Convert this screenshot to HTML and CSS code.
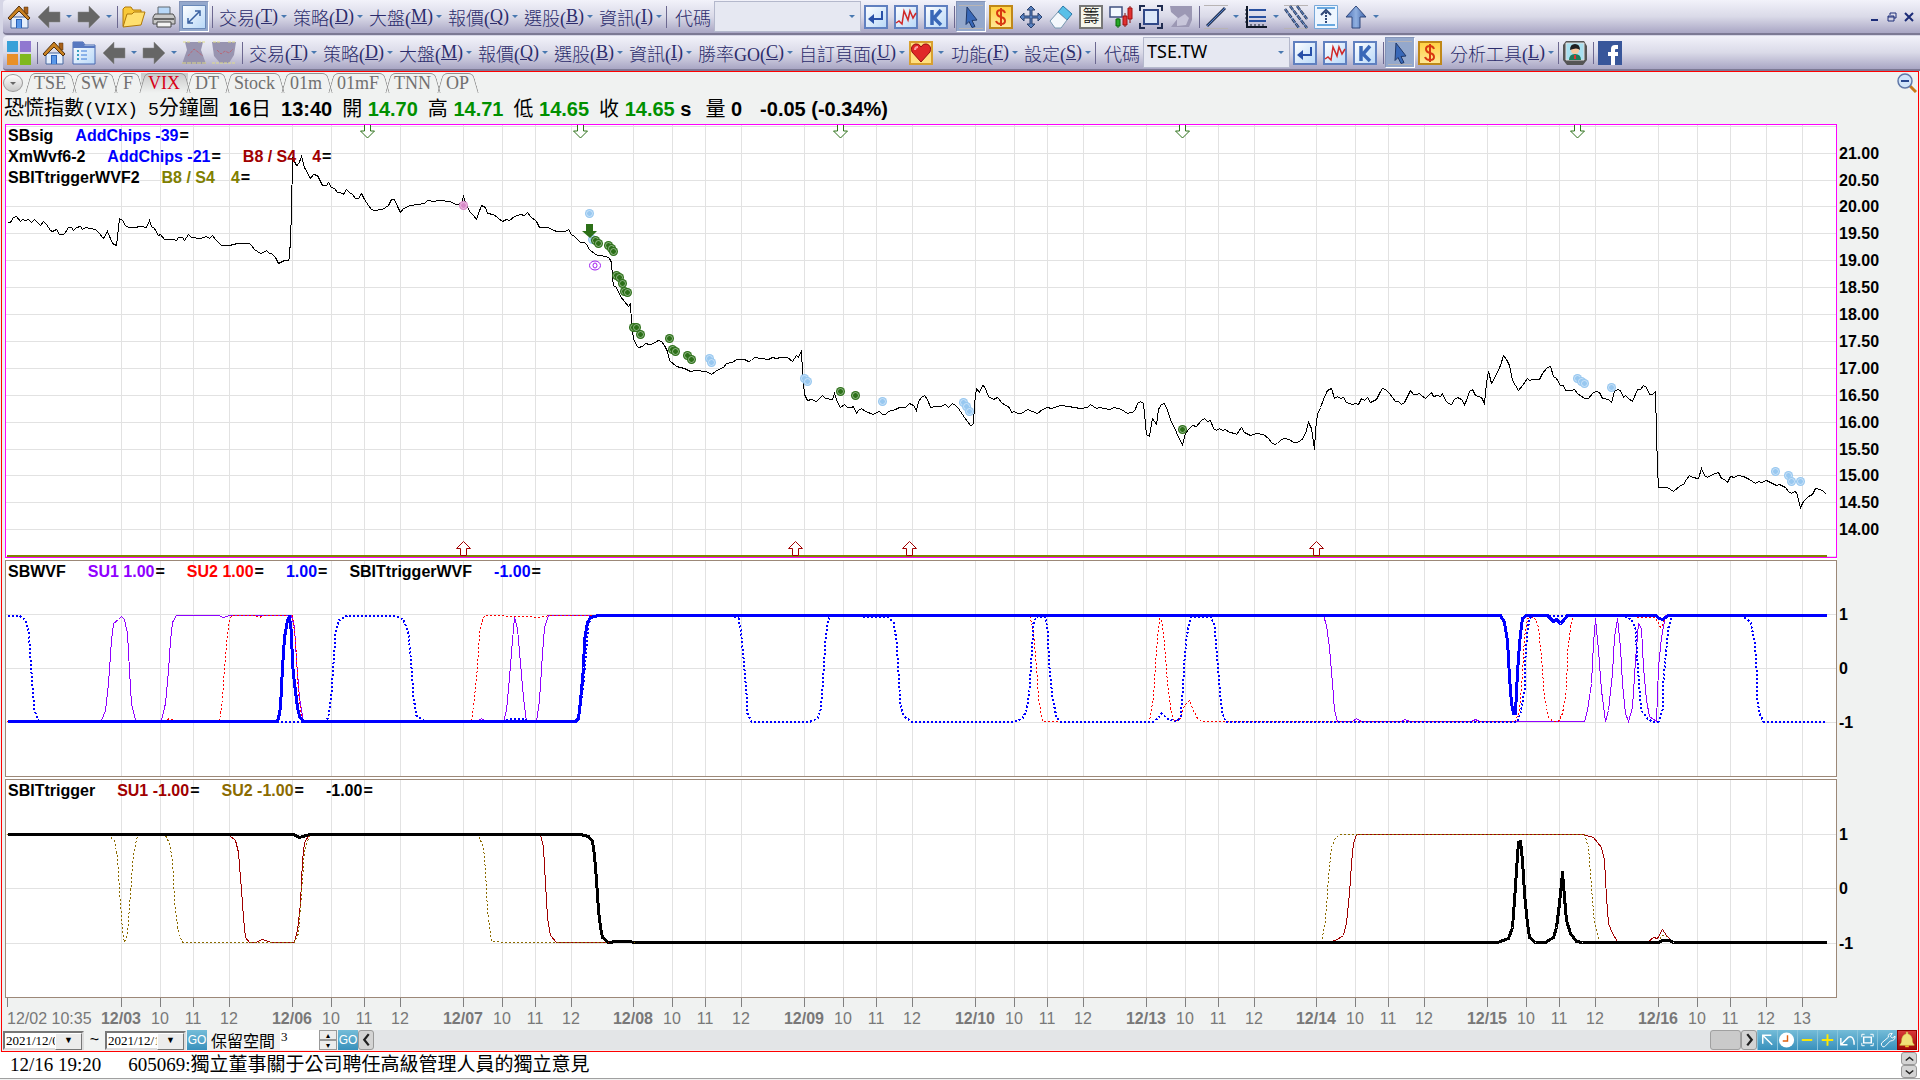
FILE: index.html
```html
<!DOCTYPE html>
<html lang="zh-Hant">
<head>
  <meta charset="UTF-8">
  <meta name="viewport" content="width=device-width, initial-scale=1.0">
  <title>恐慌指數(VIX)</title>
  <link rel="stylesheet" href="styles.css">
</head>
<body>
  <!-- icon set, 24x24 -->
  <svg class="icons" width="0" height="0">
    <defs>
      <linearGradient id="gBox" x1="0" y1="0" x2="1" y2="1"><stop offset="0" stop-color="#fff"/><stop offset="1" stop-color="#b8d8f8"/></linearGradient>
      <linearGradient id="gGold" x1="0" y1="0" x2="0" y2="1"><stop offset="0" stop-color="#ffd040"/><stop offset="1" stop-color="#ffe898"/></linearGradient>
      <linearGradient id="gArrow" x1="0" y1="0" x2="1" y2="0"><stop offset="0" stop-color="#4a70b8"/><stop offset=".5" stop-color="#90b0e0"/><stop offset="1" stop-color="#3a60a8"/></linearGradient>
      <symbol id="home" viewBox="0 0 24 24">
        <path d="M4 12h17v11H4z" fill="#e4eefc" stroke="#4868a0"/>
        <path d="M9 14h6v9H9z" fill="#2860b8"/><path d="M10 15h4v8h-4z" fill="#5a98e8"/>
        <path d="M17 2h4v7h-4z" fill="#a86018" stroke="#503010" stroke-width=".5"/>
        <path d="M1 13L12 1l11 12-2 2-9-9-9 9z" fill="#c88020" stroke="#503010"/>
      </symbol>
      <symbol id="back" viewBox="0 0 24 24"><path d="M1 12L12 1v6h11v10H12v6z" fill="#666" stroke="#888" stroke-width=".5"/></symbol>
      <symbol id="next" viewBox="0 0 24 24"><path d="M23 12L12 1v6H1v10h11v6z" fill="#666" stroke="#888" stroke-width=".5"/></symbol>
      <symbol id="folder" viewBox="0 0 24 24"><path d="M1 21V4l2-2h6l2 3h8v5" fill="#f8c838" stroke="#b07808"/><path d="M1 22L5 9h5l2-2h11l-4 13z" fill="#ffe070" stroke="#b07808"/></symbol>
      <symbol id="printer" viewBox="0 0 24 24"><path d="M6 2h12v9H6z" fill="#b8d8f8" stroke="#606870"/><path d="M3 9h18l2 3v7H1v-7z" fill="#c8c8c8" stroke="#505050"/><path d="M2 13h20v2H2z" fill="#666"/><path d="M5 17h14v5H5z" fill="#f4f4f4" stroke="#444"/></symbol>
      <symbol id="expand" viewBox="0 0 24 24"><path d="M.5.5h23v23H.5z" fill="url(#gBox)" stroke="#6888b8"/><path d="M7 17L17 7M13 6h5v5M6 13v5h5" fill="none" stroke="#3860a0" stroke-width="1.5"/></symbol>
      <symbol id="enter" viewBox="0 0 24 24"><path d="M1 1h22v22H1z" fill="url(#gBox)" stroke="#6080c0" stroke-width="2"/><path d="M18 6v8H9" fill="none" stroke="#2850a8" stroke-width="2"/><path d="M10 9v10l-6-5z" fill="#2850a8"/></symbol>
      <symbol id="zigzag" viewBox="0 0 24 24"><path d="M1 1h22v22H1z" fill="url(#gBox)" stroke="#6080c0" stroke-width="2"/><path d="M2 18l3-2 3 3 2-13 4 9 2-9 3 7 3-5" fill="none" stroke="#d02828" stroke-width="1.5"/></symbol>
      <symbol id="kline" viewBox="0 0 24 24"><path d="M1 1h22v22H1z" fill="url(#gBox)" stroke="#6080c0" stroke-width="2"/><path d="M8 5v15M17 5l-7 8 7 7" fill="none" stroke="#3a68b8" stroke-width="3.5"/></symbol>
      <symbol id="cursor" viewBox="0 0 24 24"><path d="M0 .5h24M0 23.5h24" stroke="#b8b4b4"/><path d="M8 2l10 13-5 .5 3 6-3 1-3-6-3 3z" fill="#3868b8" stroke="#203868"/></symbol>
      <symbol id="dollar" viewBox="0 0 24 24"><path d="M1 1h22v22H1z" fill="url(#gGold)" stroke="#c08818" stroke-width="2"/><path d="M16 8q-1-3-4-3-4 0-4 3t4 4 4 4-4 3-5-3M12 3v18" fill="none" stroke="#d83810" stroke-width="2"/></symbol>
      <symbol id="move" viewBox="0 0 24 24"><path d="M12 1l4 4h-3v6h6V8l4 4-4 4v-3h-6v6h3l-4 4-4-4h3v-6H5v3l-4-4 4-4v3h6V5H8z" fill="#5880c0" stroke="#28406c"/></symbol>
      <symbol id="eraser" viewBox="0 0 24 24"><path d="M14 1l9 8-5 6-9-8z" fill="#58c0e8" stroke="#2878a8"/><path d="M9 7l9 8-6 8H6l-5-7z" fill="#f4f8fc" stroke="#7898b0"/></symbol>
      <symbol id="candles" viewBox="0 0 24 24"><path d="M5 2h8v10H1V2z" fill="#f4f8ff" stroke="#405080" stroke-width="1.5"/><path d="M9 13v10" stroke="#086808"/><path d="M7 14h4v7H7z" fill="#28a828" stroke="#086808"/><path d="M16 8v14M21 1v17" stroke="#801010"/><path d="M14 11h4v9h-4zM19 3h4v11h-4z" fill="#e03030" stroke="#a01010"/></symbol>
      <symbol id="frame" viewBox="0 0 24 24"><path d="M5 5h14v14H5z" fill="#dce8fa" stroke="#304888" stroke-width="2"/><path d="M1 6V1h5M18 1h5v5M23 18v5h-5M6 23H1v-5" fill="none" stroke="#202c50" stroke-width="2"/></symbol>
      <symbol id="disabled" viewBox="0 0 24 24"><path d="M1 1h22v14l-3 7H2l7-9-7-6z" fill="#9c98b4"/><path d="M8 14l8-5 4 4-3 7-9 1z" fill="#c8c6da"/></symbol>
      <symbol id="line" viewBox="0 0 24 24"><path d="M0 .5h24M0 23.5h24" stroke="#b8b4b4"/><path d="M3 21L21 3" stroke="#283858" stroke-width="3"/><path d="M3 21L21 3" stroke="#5080d0"/></symbol>
      <symbol id="levels" viewBox="0 0 24 24"><path d="M3 1v21h20" fill="none" stroke="#101828" stroke-width="2"/><path d="M5 5h17M5 12h17M5 16h17" stroke="#2850a0" stroke-width="2"/><path d="M1 5h3M1 9h3M1 13h3M1 17h3M7 19v3M11 19v3M15 19v3M19 19v3" stroke="#101828"/></symbol>
      <symbol id="hatch" viewBox="0 0 24 24"><path d="M0 .5h24M0 23.5h24" stroke="#b8b4b4"/><path d="M1 4l14 19M6 1l17 22M13 1l10 13" stroke="#283858" stroke-width="2.5" stroke-dasharray="5 1"/><path d="M1 4l14 19M6 1l17 22M13 1l10 13" stroke="#6890d0"/></symbol>
      <symbol id="range" viewBox="0 0 24 24"><path d="M.5.5h23v23H.5z" fill="#eef6ff" stroke="#78a8d8"/><path d="M3 3h18M3 20h18" stroke="#68a8e0" stroke-width="2"/><path d="M12 18V6" stroke="#304878" stroke-width="2" stroke-dasharray="2 1"/><path d="M7 10l5-5 5 5" fill="none" stroke="#304878" stroke-width="2"/></symbol>
      <symbol id="up" viewBox="0 0 24 24"><path d="M12 1l10 11h-6v11H8V12H2z" fill="url(#gArrow)" stroke="#30487c"/></symbol>
      <symbol id="tiles" viewBox="0 0 24 24"><path d="M0 0h11v11H0z" fill="#38a0d8"/><path d="M13 0h11v11H13z" fill="#9078d0"/><path d="M0 13h11v11H0z" fill="#e89028"/><path d="M13 13h11v11H13z" fill="#80b820"/></symbol>
      <symbol id="list" viewBox="0 0 24 24"><path d="M1 1h10l2 3h10v19H1z" fill="url(#gBox)" stroke="#4868b0"/><path d="M1 1h10l2 4h10v2H1z" fill="#5878c0"/><path d="M5 10h2M5 14h2M5 18h2" stroke="#38a0c0" stroke-width="2"/><path d="M9 10h6M9 14h6M9 18h6" stroke="#3878d8"/></symbol>
      <symbol id="histA" viewBox="0 0 24 24"><path d="M3 1h18l-2 8 5 14H0L5 9z" fill="#9894b0"/><path d="M1 1h7M16 1h7" stroke="#e0dc88" stroke-dasharray="3 1"/><path d="M6 15l6-7 4 3 5 4" fill="none" stroke="#b86878" stroke-dasharray="3 1"/><path d="M0 22h24" stroke="#e0dc88" stroke-dasharray="4 1"/></symbol>
      <symbol id="histB" viewBox="0 0 24 24"><path d="M0 1h24l-2 13-5 8H8L2 15z" fill="#9894b0"/><path d="M1 1h8M16 1h7M0 22h24" stroke="#e0dc88" stroke-dasharray="3 1"/><path d="M5 9l4 4 4-3 4 2 4-4" fill="none" stroke="#b86878" stroke-dasharray="3 1"/></symbol>
      <symbol id="heart" viewBox="0 0 24 24"><path d="M1 1h22v22H1z" fill="#ffe080" stroke="#d8a030" stroke-width="2"/><path d="M12 21L3 11q-2-6 3-8 4-1 6 3 2-4 6-3 5 2 3 8z" fill="#e02828" stroke="#981010"/><path d="M6 9q0-3 3-3" fill="none" stroke="#ffa0a0" stroke-width="2"/></symbol>
      <symbol id="person" viewBox="0 0 24 24"><path d="M3 0h18l3 5v14l-4 5H4l-4-5V4z" fill="#555"/><path d="M3 2h18v17H3z" fill="#a8e0f0" stroke="#ddd"/><path d="M6 19q0-6 6-6t6 6z" fill="#207858"/><circle cx="12" cy="9" r="4" fill="#f8c8a0"/><path d="M7 9q0-6 5-6t5 6q-3-3-10 0z" fill="#202020"/><path d="M11 14h2v4h-2z" fill="#e03030"/></symbol>
      <symbol id="facebook" viewBox="0 0 24 24"><path d="M0 0h24v24H0z" fill="#38569a"/><path d="M20 4h-3q-4 0-4 4v3h-3v4h3v9h4v-9h3v-4h-3V9q0-1 1-1h2z" fill="#fff"/></symbol>
      <symbol id="magnifier" viewBox="0 0 20 20"><path d="M13 13l6 6" stroke="#c87818" stroke-width="3"/><circle cx="8" cy="8" r="7" fill="#d0e4fa" stroke="#6078a8" stroke-width="1.5"/><path d="M4 8h8" stroke="#284890" stroke-width="2"/></symbol>
      <symbol id="toCorner" viewBox="0 0 20 20"><path d="M5 14V5h9M5 5l10 10" fill="none" stroke="#fff" stroke-width="1.5"/></symbol>
      <symbol id="clock" viewBox="0 0 20 20"><circle cx="9" cy="10" r="8" fill="#fff"/><path d="M10 5v6H5" fill="none" stroke="#e06010" stroke-width="1.5"/></symbol>
      <symbol id="minus" viewBox="0 0 20 20"><path d="M4 10h11" stroke="#ffe800" stroke-width="2"/></symbol>
      <symbol id="plus" viewBox="0 0 20 20"><path d="M4 10h12M10 4v12" stroke="#ffe800" stroke-width="2"/></symbol>
      <symbol id="undo" viewBox="0 0 20 20"><path d="M3 8v7h7M3 15l8-8q6-2 6 8" fill="none" stroke="#fff" stroke-width="1.5"/></symbol>
      <symbol id="fit" viewBox="0 0 20 20"><path d="M6 7h8v6H6z" fill="none" stroke="#fff" stroke-width="1.5"/><path d="M4 7V4h3M13 4h3v3M16 13v3h-3M7 16H4v-3" fill="none" stroke="#fff"/></symbol>
      <symbol id="wrench" viewBox="0 0 20 20"><path d="M4 13l7-6q-1-4 4-4l-2 3 2 2 3-2q0 5-5 5l-6 6q-2 1-3-1t0-3z" fill="none" stroke="#fff"/></symbol>
      <symbol id="bell" viewBox="0 0 20 20"><path d="M2 15q2-1 2-6 1-5 5-6V1h2v2q4 1 5 6 0 5 2 6v1H2z" fill="#f0e078" stroke="#b89828" stroke-width=".5"/><path d="M8 16h4v2H8z" fill="#f0c030"/></symbol>
    </defs>
  </svg>

  <header class="toolbars">
    <div class="toolbar">
      <button class="tool" aria-label="首頁"><svg><use href="#home"/></svg></button>
      <button class="tool" aria-label="上一頁"><svg><use href="#back"/></svg></button>
      <button class="drop" aria-label="更多"></button>
      <button class="tool" aria-label="下一頁"><svg><use href="#next"/></svg></button>
      <button class="drop" aria-label="更多"></button>
      <span class="sep"></span>
      <button class="tool" aria-label="開啟"><svg><use href="#folder"/></svg></button>
      <button class="tool" aria-label="列印"><svg><use href="#printer"/></svg></button>
      <button class="tool active" aria-label="全螢幕"><svg><use href="#expand"/></svg></button>
      <span class="sep"></span>
      <button class="menu">交易(<u>T</u>)</button>
      <button class="menu">策略(<u>D</u>)</button>
      <button class="menu">大盤(<u>M</u>)</button>
      <button class="menu">報價(<u>Q</u>)</button>
      <button class="menu">選股(<u>B</u>)</button>
      <button class="menu">資訊(<u>I</u>)</button>
      <span class="sep"></span>
      <label class="code" for="code1">代碼</label>
      <span class="combo"><select id="code1"><option></option></select></span>
      <button class="tool" aria-label="確定"><svg><use href="#enter"/></svg></button>
      <button class="tool" aria-label="走勢圖"><svg><use href="#zigzag"/></svg></button>
      <button class="tool" aria-label="K線"><svg><use href="#kline"/></svg></button>
      <span class="sep"></span>
      <button class="tool active" aria-label="選取"><svg><use href="#cursor"/></svg></button>
      <button class="tool" aria-label="下單"><svg><use href="#dollar"/></svg></button>
      <button class="tool" aria-label="移動"><svg><use href="#move"/></svg></button>
      <button class="tool" aria-label="清除"><svg><use href="#eraser"/></svg></button>
      <button class="tool chips">籌</button>
      <button class="tool" aria-label="K棒"><svg><use href="#candles"/></svg></button>
      <button class="tool" aria-label="框選"><svg><use href="#frame"/></svg></button>
      <button class="tool" aria-label="停用" disabled><svg><use href="#disabled"/></svg></button>
      <span class="sep"></span>
      <button class="tool" aria-label="線"><svg><use href="#line"/></svg></button>
      <button class="drop" aria-label="更多"></button>
      <button class="tool" aria-label="水平線"><svg><use href="#levels"/></svg></button>
      <button class="drop" aria-label="更多"></button>
      <button class="tool" aria-label="平行線"><svg><use href="#hatch"/></svg></button>
      <button class="tool" aria-label="區間"><svg><use href="#range"/></svg></button>
      <button class="tool" aria-label="箭頭"><svg><use href="#up"/></svg></button>
      <button class="drop" aria-label="更多"></button>
      <div class="window-buttons">
        <button aria-label="最小化"><svg viewBox="0 0 10 10"><path d="M1 8h7" stroke-width="2"/></svg></button>
        <button aria-label="還原"><svg viewBox="0 0 10 10"><path d="M3 3V1h6v5H7M1 4h6v5H1zM1 5h6"/></svg></button>
        <button aria-label="關閉"><svg viewBox="0 0 10 10"><path d="M1 1l8 8M9 1L1 9" stroke-width="2"/></svg></button>
      </div>
    </div>

    <div class="toolbar">
      <button class="tool" aria-label="版面"><svg><use href="#tiles"/></svg></button>
      <span class="sep"></span>
      <button class="tool" aria-label="首頁"><svg><use href="#home"/></svg></button>
      <button class="tool" aria-label="清單"><svg><use href="#list"/></svg></button>
      <button class="tool" aria-label="上一頁"><svg><use href="#back"/></svg></button>
      <button class="drop" aria-label="更多"></button>
      <button class="tool" aria-label="下一頁"><svg><use href="#next"/></svg></button>
      <button class="drop" aria-label="更多"></button>
      <button class="tool" aria-label="圖一" disabled><svg><use href="#histA"/></svg></button>
      <button class="tool" aria-label="圖二" disabled><svg><use href="#histB"/></svg></button>
      <span class="sep"></span>
      <button class="menu">交易(<u>T</u>)</button>
      <button class="menu">策略(<u>D</u>)</button>
      <button class="menu">大盤(<u>M</u>)</button>
      <button class="menu">報價(<u>Q</u>)</button>
      <button class="menu">選股(<u>B</u>)</button>
      <button class="menu">資訊(<u>I</u>)</button>
      <button class="menu">勝率GO(<u>C</u>)</button>
      <button class="menu">自訂頁面(<u>U</u>)</button>
      <button class="tool" aria-label="我的最愛"><svg><use href="#heart"/></svg></button>
      <button class="drop" aria-label="更多"></button>
      <button class="menu">功能(<u>F</u>)</button>
      <button class="menu">設定(<u>S</u>)</button>
      <span class="sep"></span>
      <label class="code" for="code2">代碼</label>
      <span class="combo"><select id="code2"><option>TSE.TW</option></select></span>
      <button class="tool" aria-label="確定"><svg><use href="#enter"/></svg></button>
      <button class="tool" aria-label="走勢圖"><svg><use href="#zigzag"/></svg></button>
      <button class="tool" aria-label="K線"><svg><use href="#kline"/></svg></button>
      <span class="sep"></span>
      <button class="tool active" aria-label="選取"><svg><use href="#cursor"/></svg></button>
      <button class="tool" aria-label="下單"><svg><use href="#dollar"/></svg></button>
      <button class="menu">分析工具(<u>L</u>)</button>
      <span class="sep"></span>
      <button class="tool" aria-label="客服"><svg><use href="#person"/></svg></button>
      <span class="sep"></span>
      <button class="tool" aria-label="Facebook"><svg><use href="#facebook"/></svg></button>
    </div>
  </header>

  <main class="window">
    <nav class="tabs">
      <button class="tab-menu" aria-label="頁籤"></button>
      <button class="tab">TSE</button>
      <button class="tab">SW</button>
      <button class="tab">F</button>
      <button class="tab selected">VIX</button>
      <button class="tab">DT</button>
      <button class="tab">Stock</button>
      <button class="tab">01m</button>
      <button class="tab">01mF</button>
      <button class="tab">TNN</button>
      <button class="tab">OP</button>
      <button class="zoom-out" aria-label="縮小"><svg><use href="#magnifier"/></svg></button>
    </nav>

    <h1 class="quote">
      <span class="name">恐慌指數<span class="half">(VIX)</span></span>
      <span class="period"><span class="half">5</span>分鐘圖</span>
      <span>16<i>日</i></span>
      <span>13:40</span>
      <span class="item"><i>開</i> <b>14.70</b></span>
      <span class="item"><i>高</i> <b>14.71</b></span>
      <span class="item"><i>低</i> <b>14.65</b></span>
      <span class="item"><i>收</i> <b>14.65</b> s</span>
      <span class="item volume"><i>量</i> 0</span>
      <span class="change">-0.05 (-0.34%)</span>
    </h1>

    <div class="charts">
      <section class="panel">
        <div class="legend">
          <p><span>SBsig</span><span class="blue">AddChips -39<em>=</em></span></p>
          <p><span>XmWvf6-2</span><span class="blue">AddChips -21<em>=</em></span><span class="darkred">B8 / S4</span><span class="darkred near">4<em>=</em></span></p>
          <p><span>SBITtriggerWVF2</span><span class="olive">B8 / S4</span><span class="olive near">4<em>=</em></span></p>
        </div>
        <svg id="price" viewBox="5 124 1913 436"></svg>
      </section>
      <section class="panel">
        <div class="legend">
          <p><span>SBWVF</span><span class="purple">SU1 1.00<em>=</em></span><span class="red">SU2 1.00<em>=</em></span><span class="blue">1.00<em>=</em></span><span>SBITtriggerWVF</span><span class="blue">-1.00<em>=</em></span></p>
        </div>
        <svg id="wvf" viewBox="5 560 1913 219"></svg>
      </section>
      <section class="panel">
        <div class="legend">
          <p><span>SBITtrigger</span><span class="darkred">SU1 -1.00<em>=</em></span><span class="brown">SU2 -1.00<em>=</em></span><span>-1.00<em>=</em></span></p>
        </div>
        <svg id="trigger" viewBox="5 779 1913 219"></svg>
      </section>
      <svg id="axis" viewBox="5 998 1913 32"></svg>
    </div>

    <div class="controls">
      <span class="date"><select aria-label="開始日期"><option>2021/12/02</option></select></span>
      <span class="tilde">~</span>
      <span class="date"><select aria-label="結束日期"><option>2021/12/16</option></select></span>
      <button class="go">GO</button>
      <label for="space">保留空間</label>
      <span class="spinner">
        <input id="space" type="text" value="3">
        <span class="steps"><button aria-label="增加">▴</button><button aria-label="減少">▾</button></span>
      </span>
      <button class="go">GO</button>
      <div class="scroll">
        <button class="scroll-btn" aria-label="向左"><svg viewBox="0 0 8 12"><path d="M6 1L2 6l4 5"/></svg></button>
        <span class="thumb"></span>
        <button class="scroll-btn" aria-label="向右"><svg viewBox="0 0 8 12"><path d="M2 1l4 5-4 5"/></svg></button>
      </div>
      <div class="chart-tools">
        <button aria-label="移至左上"><svg><use href="#toCorner"/></svg></button>
        <button aria-label="時間"><svg><use href="#clock"/></svg></button>
        <button aria-label="縮小"><svg><use href="#minus"/></svg></button>
        <button aria-label="放大"><svg><use href="#plus"/></svg></button>
        <button aria-label="復原"><svg><use href="#undo"/></svg></button>
        <button aria-label="符合視窗"><svg><use href="#fit"/></svg></button>
        <button aria-label="設定"><svg><use href="#wrench"/></svg></button>
        <button class="alarm" aria-label="警示"><svg><use href="#bell"/></svg></button>
      </div>
    </div>
  </main>

  <footer class="ticker">
    <time>12/16 19:20</time>
    <p>605069:獨立董事關于公司聘任高級管理人員的獨立意見</p>
    <div class="ticker-btns">
      <button class="scroll-btn" aria-label="上一則"><svg viewBox="0 0 12 8"><path d="M1 6l5-4 5 4"/></svg></button>
      <button class="scroll-btn" aria-label="下一則"><svg viewBox="0 0 12 8"><path d="M1 2l5 4 5-4"/></svg></button>
    </div>
  </footer>

  <script src="chart.js"></script>
</body>
</html>
```
FILE: styles.css
```css
* {
  box-sizing: border-box;
}

body {
  margin: 0;
  min-height: 100vh;
  display: flex;
  flex-direction: column;
  background: #f0f2f1;
  font-family: "Liberation Sans", "Noto Sans CJK TC", sans-serif;
  font-size: 16px;
  color: #000;
}

button {
  padding: 0;
  border: none;
  background: none;
  font: inherit;
  color: inherit;
}

.icons {
  position: absolute;
}

/* toolbars */
.toolbars {
  display: flex;
  flex-direction: column;
  gap: 1px;
  background: #d6d6e6;
}

.toolbar {
  display: flex;
  align-items: center;
  height: 35px;
  margin-left: 3px;
  padding-left: 1px;
  background: linear-gradient(#f2f2fa, #dadae8 50%, #a9a6c4);
  border-bottom: 2px solid #7c7994;
  border-radius: 4px 0 0 4px;
  font-family: "Liberation Serif", "Noto Sans CJK TC", serif;
  font-size: 18px;
  font-weight: 300;
  color: #2c2c6c;
}

.tool {
  flex: none;
  display: flex;
  justify-content: center;
  align-items: center;
  width: 30px;
  height: 31px;
}

.tool svg {
  width: 24px;
  height: 24px;
}

.tool.active {
  background: #94a8cc;
  border: 1px solid #8494b8;
  border-bottom-color: #fff;
  border-right-color: #fff;
}

.tool.chips {
  width: 24px;
  height: 24px;
  margin: 0 3px;
  background: #f6f6ec;
  border: 2px solid #777;
  color: #000;
  font-size: 17px;
  line-height: 20px;
}

.drop {
  flex: none;
  width: 10px;
  height: 31px;
  display: flex;
  justify-content: center;
  align-items: center;
}

.drop::before,
.menu::after,
.combo::after {
  content: "";
  flex: none;
  border: 3px solid transparent;
  border-top-color: #4878b0;
  border-bottom: 0;
}

.sep {
  flex: none;
  width: 1px;
  height: 22px;
  margin: 0 1px 0 3px;
  background: #6c6890;
}

.menu {
  display: flex;
  align-items: center;
  padding-left: 5px;
  padding-right: 1px;
  white-space: nowrap;
}

.menu::after {
  margin-left: 3px;
}

.code {
  padding: 0 3px 0 7px;
}

.combo {
  position: relative;
  flex: none;
  width: 147px;
  height: 31px;
}

.combo select {
  width: 100%;
  height: 100%;
  padding: 0 3px 3px;
  appearance: none;
  border: 1px solid #b4b8cc;
  border-radius: 0;
  background: #e6e8f2;
  font-family: "Noto Sans", sans-serif;
  font-size: 18px;
  color: #000;
}

.combo::after {
  position: absolute;
  right: 6px;
  top: 14px;
}

.window-buttons {
  display: flex;
  gap: 7px;
  margin-left: auto;
  padding-right: 6px;
}

.window-buttons svg {
  display: block;
  width: 10px;
  height: 10px;
  fill: none;
  stroke: #1c2c78;
}

/* chart window */
.window {
  margin: 0 1px;
  border: 1px solid #f00;
}

.tabs {
  display: flex;
  align-items: center;
  height: 22px;
  font-family: "Liberation Serif", serif;
  font-size: 18px;
  color: #707070;
}

.tab-menu {
  width: 20px;
  height: 18px;
  margin: 0 4px 0 1px;
  display: flex;
  justify-content: center;
  align-items: center;
  border: 1px solid #999;
  border-radius: 50%;
  background: linear-gradient(#fff, #c8c8c8);
}

.tab-menu::before {
  content: "";
  border: 3px solid transparent;
  border-top-color: #666;
  border-bottom: 0;
}

.tab {
  position: relative;
  height: 20px;
  padding: 0 8px 0 7px;
  line-height: 20px;
}

.tab::before,
.tab::after {
  content: "";
  position: absolute;
  top: 0;
  bottom: 0;
  width: 50%;
  border-top: 1px solid #909090;
}

.tab::before {
  left: 1px;
  border-left: 1px solid #909090;
  border-top-left-radius: 5px;
  transform: skewX(-16deg);
}

.tab::after {
  right: 1px;
  border-right: 1px solid #909090;
  border-top-right-radius: 5px;
  transform: skewX(16deg);
}

.tab.selected {
  color: #d80018;
  background: linear-gradient(#c8c8c8, #f0f2f1);
}

.zoom-out {
  margin-left: auto;
  margin-right: 1px;
}

.zoom-out svg {
  display: block;
  width: 20px;
  height: 20px;
}

.quote {
  display: flex;
  align-items: center;
  gap: 10px;
  height: 30px;
  margin: 0;
  padding-left: 2px;
  font-size: 20px;
  line-height: 28px;
  white-space: nowrap;
}

.quote i,
.quote .name,
.quote .period {
  font-style: normal;
  font-weight: 400;
}

.quote b {
  color: #009000;
}

.quote .half {
  font-family: "Liberation Mono", monospace;
  font-size: 18px;
}

.quote .volume {
  margin-left: 4px;
}

.quote .change {
  margin-left: 8px;
}

.charts {
  padding-left: 3px;
}

.charts svg {
  display: block;
  width: 100%;
  height: auto;
}

.panel {
  position: relative;
}

.legend {
  position: absolute;
  left: 3px;
  top: 1px;
  font-weight: bold;
  line-height: 21px;
}

.legend p {
  display: flex;
  gap: 22px;
  margin: 0;
}

.legend em {
  margin-left: 1px;
  font-style: normal;
  color: #000;
}

.legend .near {
  margin-left: -6px;
}

.blue { color: #00f; }
.darkred { color: #a00000; }
.olive { color: #808000; }
.purple { color: #9000ff; }
.red { color: #f00; }
.brown { color: #8b6b00; }

/* chart drawing */
.plot { fill: #fff; }
.grid { stroke: #e2e2e2; stroke-width: 1; }
.border { fill: none; stroke: #9c8878; }
.border.focus { stroke: #f0f; }
.tick { stroke: #808080; }
.series { fill: none; stroke-width: 1; }
.grid, .border, .tick, .series { shape-rendering: crispEdges; }
.price-line { stroke: #000; }
.su1 { stroke: #9000ff; }
.su2 { stroke: #f00; stroke-dasharray: 2 2; }
.wvf-dot { stroke: #00f; stroke-width: 2; stroke-dasharray: 2 2; }
.wvf-main { stroke: #00f; stroke-width: 3; stroke-linejoin: round; }
.trig1 { stroke: #a00000; }
.trig2 { stroke: #8b6b00; stroke-dasharray: 2 2; }
.trig-main { stroke: #000; stroke-width: 3; stroke-linejoin: round; }
.base { stroke: #808000; stroke-width: 2; }
.up-arrow { fill: #fff; stroke: #a00000; }
.down-arrow { fill: #fff; stroke: #2c7018; }
.sell { fill: #2c7018; }
.dot-green { fill: #2c7018; }
.dot-blue { fill: #98c8f0; }
.dot-pink { fill: #d888c8; }
.dot-ring { fill: none; stroke: #fff; stroke-opacity: .45; }
.ring { fill: none; stroke: #a020f0; }
.y-label { font-weight: bold; font-size: 16px; }
.x-label { font-size: 16px; fill: #787878; text-anchor: middle; }
.x-label.day { font-weight: bold; }
.x-label.first { text-anchor: start; }

/* bottom controls */
.controls {
  display: flex;
  align-items: center;
  height: 21px;
  padding-left: 1px;
  padding-bottom: 1px;
}

.date {
  position: relative;
  width: 81px;
  height: 19px;
  border: 2px solid #777;
  border-right-color: #ddd;
  border-bottom-color: #ddd;
  background: #fff;
}

.date select {
  display: block;
  width: 77px;
  height: 15px;
  padding: 0 0 0 1px;
  appearance: none;
  border: none;
  background: none;
  font-family: "Liberation Serif", serif;
  font-size: 13px;
}

.date::after {
  content: "▼";
  position: absolute;
  top: 0;
  right: 0;
  width: 25px;
  height: 15px;
  border: 1px solid #fff;
  border-right-color: #777;
  border-bottom-color: #777;
  background: #ececec;
  font-size: 9px;
  line-height: 13px;
  text-align: center;
  pointer-events: none;
}

.tilde {
  width: 21px;
  text-align: center;
}

.go {
  width: 20px;
  height: 20px;
  margin-left: 1px;
  background: linear-gradient(#74bcd8, #3890bc);
  color: #fff;
  font-size: 12px;
}

.controls label {
  padding: 0 5px 0 4px;
}

.spinner {
  display: flex;
  width: 57px;
  height: 20px;
  background: #fff;
}

.spinner input {
  flex: 1;
  min-width: 0;
  padding: 0 1px 6px;
  border: none;
  background: none;
  font-family: "Liberation Serif", serif;
  font-size: 13px;
}

.steps {
  display: flex;
  flex-direction: column;
  width: 18px;
}

.steps button {
  flex: 1;
  border: 1px solid #999;
  background: #ececec;
  font-size: 8px;
  line-height: 7px;
}

.scroll {
  flex: 1;
  display: flex;
  height: 20px;
  background: #e3e5e7;
}

.scroll-btn {
  display: flex;
  justify-content: center;
  align-items: center;
  width: 16px;
  height: 20px;
  border: 1px solid #999;
  border-radius: 3px;
  background: #d4d4d4;
}

.scroll-btn svg {
  width: 9px;
  fill: none;
  stroke: #222;
  stroke-width: 2;
}

.thumb {
  width: 31px;
  margin-left: auto;
  border: 1px solid #a0a0a0;
  border-radius: 3px;
  background: #cacaca;
}

.chart-tools {
  display: flex;
  padding-right: 1px;
}

.chart-tools button {
  width: 20px;
  height: 20px;
  background: linear-gradient(#74bcd8, #3890bc);
  border-left: 1px solid #88c4dc;
}

.chart-tools svg {
  display: block;
  width: 19px;
  height: 20px;
}

.chart-tools .alarm {
  background: linear-gradient(#d83838, #a00808);
  border: 1px solid #900000;
}

.chart-tools .alarm svg {
  width: 18px;
  height: 18px;
}

/* news ticker */
.ticker {
  display: flex;
  align-items: center;
  height: 27px;
  background: #fff;
  border-bottom: 1px solid #a0a0a0;
  font-family: "Liberation Serif", "Noto Sans CJK TC", serif;
  font-size: 19px;
  line-height: 24px;
}

.ticker time {
  padding-left: 10px;
}

.ticker p {
  margin: 0 0 0 27px;
}

.ticker-btns {
  margin-left: auto;
  padding-right: 3px;
}

.ticker-btns .scroll-btn {
  height: 13px;
}
```
FILE: chart.js
```js
const NS = 'http://www.w3.org/2000/svg';

// trading days on the time axis, x of the first bar of each day
const days = [
  ['12/03', 121], ['12/06', 292], ['12/07', 463], ['12/08', 633], ['12/09', 804],
  ['12/10', 975], ['12/13', 1146], ['12/14', 1316], ['12/15', 1487], ['12/16', 1658]
];
const hours = [['10', 39], ['11', 72], ['12', 108]];

function add(svg, tag, attrs, text) {
  const el = document.createElementNS(NS, tag);
  for (const key in attrs) el.setAttribute(key, attrs[key]);
  if (text !== undefined) el.textContent = text;
  svg.appendChild(el);
  return el;
}

function hline(svg, cls, y, x1, x2) {
  add(svg, 'line', { class: cls, x1: x1, x2: x2, y1: y + 0.5, y2: y + 0.5 });
}

function vline(svg, cls, x, y1, y2) {
  add(svg, 'line', { class: cls, x1: x + 0.5, x2: x + 0.5, y1: y1, y2: y2 });
}

function eachTime(fn) {
  days.forEach(function (d) {
    fn(d[0], d[1], true);
    hours.forEach(function (h) { fn(h[0], d[1] + h[1], false); });
  });
  fn('13', 1802, false);
}

function frame(svg, top, bottom, levels, cls) {
  add(svg, 'rect', { class: 'plot', x: 5, y: top, width: 1832, height: bottom - top + 3 });
  eachTime(function (label, x) { vline(svg, 'grid', x, top, bottom); });
  levels.forEach(function (l) {
    hline(svg, 'grid', l[0], 5, 1836);
    if (l[1]) add(svg, 'text', { class: 'y-label', x: 1839, y: l[0] + 6 }, l[1]);
  });
  add(svg, 'rect', { class: cls, x: 5.5, y: top + 0.5, width: 1831, height: bottom - top - 1 });
}

function series(svg, cls, points) {
  add(svg, 'polyline', { class: 'series ' + cls, points: points, transform: 'translate(.5 .5)' });
}

function dots(svg, cls, list) {
  list.forEach(function (p) {
    add(svg, 'circle', { class: cls, cx: p[0] + 0.5, cy: p[1] + 0.5, r: 4.5 });
    add(svg, 'circle', { class: 'dot-ring', cx: p[0] + 0.5, cy: p[1] + 0.5, r: 3 });
  });
}

// price
const price = document.getElementById('price');
const levels = [[126, ''], [556, '']];
for (let i = 0; i < 15; i++) {
  levels.push([Math.round(152.6 + i * 26.9), (21 - i * 0.5).toFixed(2)]);
}
frame(price, 124, 558, levels, 'border focus');
series(price, 'price-line', '7,222 10,222 13,217 16,216 20,221 22,219 25,220 28,219 31,222 34,219 40,225 43,221 46,224 50,230 52,231 56,229 59,234 63,234 65,232 68,227 71,227 73,230 76,227 80,226 82,229 85,227 95,229 98,232 103,238 107,231 112,243 116,245 119,218 122,220 125,225 128,227 134,227 140,226 146,227 149,220 151,226 154,228 158,235 160,234 164,239 173,239 176,240 178,237 182,237 184,240 188,234 191,237 194,237 197,238 200,238 206,236 209,238 212,235 215,239 221,245 229,245 237,243 242,243 249,243 251,245 254,249 260,253 263,252 266,250 269,253 271,253 275,257 278,263 284,260 287,260 289,259 291,213 292,157 296,165 298,164 301,156 304,167 310,178 313,174 317,175 322,185 326,185 328,182 331,187 334,188 337,192 340,192 343,194 346,189 349,192 352,194 355,198 358,198 361,193 364,199 368,205 371,209 374,210 382,209 388,205 391,199 394,199 397,206 400,212 403,208 410,205 418,204 424,203 427,200 433,201 439,200 449,201 456,204 461,203 463,196 465,202 469,211 473,215 476,219 478,213 481,205 485,207 487,213 493,214 502,221 506,219 509,220 514,216 520,214 524,215 527,212 530,216 536,221 539,227 548,227 553,230 557,231 565,231 568,229 571,234 574,236 580,242 584,242 586,244 589,249 595,254 598,255 606,256 609,258 611,262 612,277 613,285 616,287 620,296 628,306 630,303 631,322 633,338 636,345 638,347 642,346 645,343 649,344 651,344 658,340 661,341 664,345 667,351 669,360 676,366 684,368 690,371 695,370 706,371 711,374 715,371 720,368 723,367 726,363 732,362 736,359 744,359 748,361 751,360 754,357 768,359 772,357 776,358 780,357 787,357 792,361 796,355 798,357 801,350 802,373 804,394 807,400 811,399 816,401 822,395 825,398 832,399 834,393 837,402 840,407 844,404 847,407 851,407 853,406 856,413 858,410 861,408 865,411 873,414 876,412 879,411 882,414 885,414 888,411 895,409 899,407 905,407 909,403 913,405 916,410 918,401 921,397 924,395 927,399 930,407 936,406 940,406 945,404 948,407 952,403 955,405 958,408 964,417 970,425 973,424 974,403 976,388 979,392 982,385 984,386 988,396 993,399 997,397 1002,403 1009,407 1011,412 1014,411 1017,413 1021,413 1027,409 1037,413 1042,409 1047,407 1051,408 1054,407 1060,405 1068,406 1080,408 1087,407 1090,404 1096,408 1099,407 1109,409 1114,407 1121,409 1127,413 1134,411 1137,403 1140,401 1143,403 1146,434 1149,436 1152,418 1156,424 1158,409 1161,404 1164,403 1167,410 1171,422 1174,427 1178,437 1182,444 1185,433 1188,429 1192,425 1196,426 1201,420 1204,418 1207,421 1210,420 1213,428 1216,430 1219,428 1222,430 1225,429 1229,432 1235,433 1236,434 1241,427 1244,432 1250,435 1256,433 1263,434 1268,438 1271,442 1274,444 1277,443 1280,440 1283,438 1289,439 1293,442 1296,442 1301,440 1305,433 1308,422 1311,428 1314,449 1315,430 1317,414 1320,407 1323,399 1327,390 1331,388 1334,398 1337,396 1340,398 1343,397 1346,402 1352,404 1355,403 1358,404 1361,398 1364,400 1367,397 1370,402 1376,399 1379,393 1382,388 1385,389 1389,393 1392,397 1395,401 1398,401 1401,404 1404,402 1410,390 1413,394 1416,394 1419,393 1421,395 1425,398 1431,392 1433,396 1437,395 1440,396 1442,393 1445,400 1448,403 1451,404 1454,399 1457,397 1461,399 1464,404 1466,400 1469,391 1472,389 1475,395 1481,397 1484,403 1486,383 1488,371 1491,383 1494,378 1500,365 1503,355 1506,359 1509,365 1512,380 1518,390 1522,385 1527,378 1529,380 1532,379 1539,379 1542,373 1547,367 1550,366 1553,376 1556,378 1560,385 1563,385 1565,390 1571,390 1574,389 1577,393 1584,398 1588,398 1593,392 1596,391 1599,392 1602,398 1608,399 1611,402 1614,391 1617,389 1620,390 1623,397 1625,395 1628,398 1632,401 1637,389 1640,389 1643,385 1646,387 1649,394 1652,394 1655,391 1656,433 1657,467 1658,487 1667,487 1673,491 1680,485 1683,484 1686,479 1689,475 1692,477 1698,478 1701,468 1704,475 1707,477 1712,474 1718,472 1721,478 1724,479 1727,482 1730,476 1734,477 1737,475 1743,476 1749,479 1755,483 1758,481 1761,482 1766,480 1776,485 1779,484 1785,487 1788,491 1791,493 1794,491 1796,492 1800,507 1803,501 1808,496 1812,494 1815,488 1820,489 1823,491 1826,494');
add(price, 'line', { class: 'series base', x1: 7, x2: 1827, y1: 556, y2: 556 });

[367, 580, 840, 1182, 1577].forEach(function (x) {
  add(price, 'path', { class: 'down-arrow', d: 'M' + (x - 3) + '.5 125v6h-4l7 7l7-7h-4v-6' });
});
[463, 795, 909, 1316].forEach(function (x) {
  add(price, 'path', { class: 'up-arrow', d: 'M' + (x - 3) + '.5 555.5v-7h-4l7-7l7 7h-4v7z' });
});
dots(price, 'dot-blue', [[589, 213], [592, 239], [709, 358], [711, 362], [804, 378], [807, 381], [882, 401], [963, 402], [966, 406], [969, 411], [1577, 378], [1581, 381], [1584, 383], [1611, 387], [1775, 471], [1788, 475], [1791, 481], [1800, 481]]);
dots(price, 'dot-green', [[595, 240], [598, 243], [608, 245], [611, 248], [613, 251], [616, 275], [619, 277], [622, 283], [624, 291], [627, 292], [633, 327], [636, 327], [640, 334], [669, 338], [672, 349], [675, 351], [687, 355], [691, 359], [840, 391], [855, 395], [1182, 429]]);
dots(price, 'dot-pink', [[463, 205]]);
add(price, 'path', { class: 'sell', d: 'M586 224h7v7h4l-7 7l-8-7h4z' });
add(price, 'ellipse', { class: 'ring', cx: 595, cy: 265.5, rx: 5.5, ry: 4.5 });
add(price, 'ellipse', { class: 'ring', cx: 595, cy: 265.5, rx: 2, ry: 2.5 });

// WVF signals
const wvf = document.getElementById('wvf');
frame(wvf, 560, 777, [[614, '1'], [668, '0'], [722, '-1']], 'border');
series(wvf, 'su1', '7,721 101,720 105,710 108,683 111,640 113,623 118,619 121,616 124,619 127,633 129,670 131,703 135,720 161,720 165,703 168,670 170,640 172,622 176,615 218,615 223,617 229,615 291,615 294,627 296,660 299,697 303,721 478,720 481,718 484,720 503,721 506,710 509,677 512,640 514,617 517,628 520,663 523,697 526,721 536,721 539,700 542,653 544,627 548,615 1323,615 1326,625 1329,647 1332,683 1334,710 1337,721 1352,721 1356,718 1361,721 1401,721 1404,719 1410,721 1471,721 1475,719 1479,721 1584,721 1587,710 1591,683 1593,643 1595,618 1598,650 1601,690 1605,721 1608,710 1612,673 1614,637 1617,618 1620,647 1622,683 1625,713 1628,721 1632,707 1635,660 1638,623 1641,628 1643,667 1646,700 1649,716 1656,721 1658,667 1661,637 1665,615 1826,615');
series(wvf, 'su2', '7,721 165,720 169,718 173,720 219,720 222,700 224,667 227,633 229,620 231,615 255,615 259,617 263,615 292,615 295,640 298,693 301,717 304,721 471,721 473,707 477,667 479,633 482,620 484,615 524,616 539,617 549,615 1029,615 1033,630 1036,667 1038,697 1042,721 1149,721 1153,697 1156,650 1159,618 1161,619 1164,643 1167,683 1171,713 1174,721 1180,718 1184,705 1189,700 1193,710 1197,718 1202,721 1515,721 1519,710 1522,673 1524,637 1527,618 1534,617 1538,627 1541,657 1544,697 1548,717 1553,721 1558,721 1562,713 1566,690 1567,653 1570,627 1573,615 1655,617 1660,627 1662,625 1665,615 1826,615');
series(wvf, 'wvf-dot', '7,615 17,615 20,616 25,620 28,630 30,657 32,687 34,710 38,721 326,721 328,715 331,693 333,663 335,633 338,620 347,615 394,615 403,619 408,633 411,667 413,697 416,715 424,721 506,720 513,718 524,718 527,721 576,721 580,706 583,683 586,647 588,623 592,617 598,615 733,616 738,618 740,628 743,657 746,693 747,713 751,721 810,721 817,718 820,710 822,687 825,640 827,623 829,617 833,615 888,617 893,622 896,640 898,673 900,703 903,715 910,721 1014,721 1022,718 1026,710 1029,690 1031,657 1033,623 1036,616 1045,616 1047,630 1049,667 1052,697 1056,717 1060,721 1153,721 1158,717 1161,713 1167,718 1176,721 1180,717 1182,693 1184,660 1186,637 1189,622 1191,616 1210,616 1214,625 1217,660 1220,697 1222,713 1225,721 1517,721 1520,713 1524,690 1525,657 1527,630 1529,618 1533,615 1624,616 1631,619 1635,628 1637,660 1639,690 1641,710 1646,717 1651,721 1658,721 1662,710 1663,680 1666,647 1668,627 1671,618 1675,615 1743,616 1750,622 1754,640 1756,667 1757,700 1759,713 1763,721 1824,721');
series(wvf, 'wvf-main', '7,721 276,721 278,718 280,707 282,667 284,637 287,620 289,616 291,633 292,663 294,683 297,707 299,716 303,721 575,721 578,718 580,700 583,667 584,640 587,622 590,617 598,615 1500,615 1504,622 1507,640 1509,677 1511,703 1513,713 1515,713 1516,690 1518,657 1520,633 1522,618 1526,615 1547,615 1553,621 1556,619 1560,623 1563,620 1567,615 1655,615 1659,618 1662,619 1668,615 1826,615');

// trigger signals
const trigger = document.getElementById('trigger');
frame(trigger, 779, 998, [[834, '1'], [888, '0'], [943, '-1']], 'border');
series(trigger, 'trig1', '7,834 229,835 235,840 238,852 241,890 243,917 245,937 249,942 255,942 262,939 271,942 294,942 297,930 300,903 302,860 304,842 309,834 540,834 543,847 545,883 547,917 550,935 556,942 1327,942 1335,940 1343,935 1346,923 1349,893 1351,863 1353,843 1356,834 1582,834 1593,837 1601,847 1604,860 1606,897 1608,923 1612,933 1617,941 1648,941 1653,937 1657,938 1662,929 1666,935 1672,941 1826,942');
series(trigger, 'trig2', '7,834 108,835 114,840 117,857 119,890 122,930 124,942 127,933 130,893 133,853 137,835 165,835 169,843 172,860 174,900 178,933 182,942 294,942 298,933 301,893 304,850 309,835 478,835 483,847 485,870 487,910 491,941 505,942 1321,942 1325,920 1328,877 1331,847 1335,837 1340,834 1584,834 1588,847 1591,887 1594,923 1599,942 1657,942 1662,935 1666,936 1670,941 1826,942');
series(trigger, 'trig-main', '7,834 293,834 299,837 309,834 580,834 588,836 592,841 594,855 596,880 598,910 600,927 602,937 608,942 616,941 629,941 634,942 1497,942 1508,938 1512,927 1514,900 1516,870 1518,842 1520,841 1522,860 1524,893 1527,923 1529,937 1535,942 1545,942 1553,937 1556,927 1559,903 1562,872 1564,897 1566,920 1570,933 1576,941 1582,942 1658,942 1662,940 1669,940 1673,942 1826,942');

// time axis
const axis = document.getElementById('axis');
vline(axis, 'tick', 7, 998, 1007);
add(axis, 'text', { class: 'x-label first', x: 7, y: 1024 }, '12/02 10:35');
eachTime(function (label, x, isDay) {
  vline(axis, 'tick', x, 998, 1007);
  add(axis, 'text', { class: isDay ? 'x-label day' : 'x-label', x: x, y: 1024 }, label);
});
```
